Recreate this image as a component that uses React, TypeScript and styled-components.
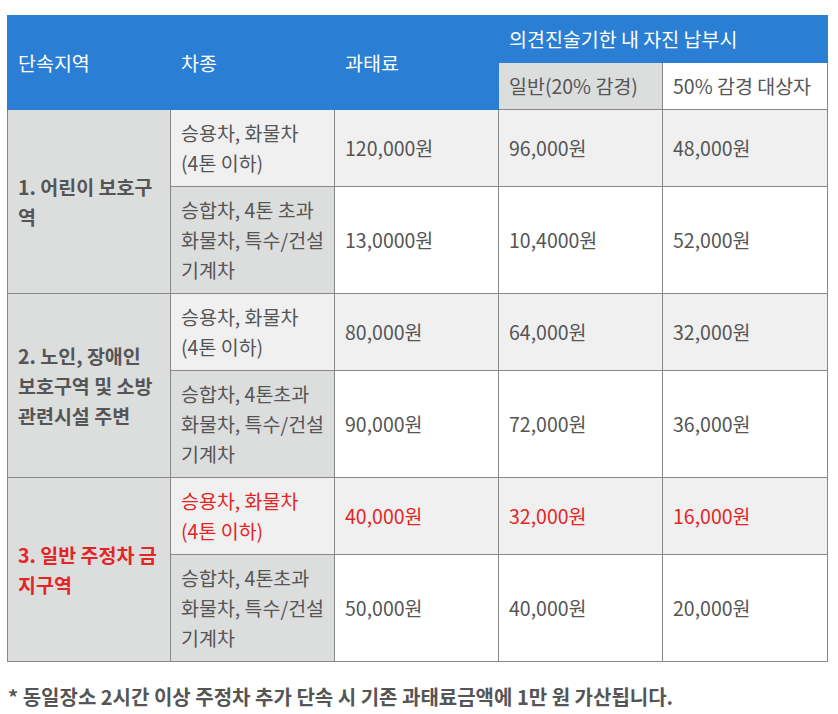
import React from "react";
import styled, { createGlobalStyle } from "styled-components";

const Global = createGlobalStyle`
  html, body { margin: 0; padding: 0; background: #fff; }
  body { font-family: "Noto Sans CJK KR", "Noto Sans", sans-serif; color: #555; }
`;

const Page = styled.div`
  padding: 15px 11px 0 7px;
`;

const Table = styled.table`
  width: 820px;
  border-collapse: collapse;
  table-layout: fixed;
  font-size: 19.5px;
  line-height: 30px;
`;

const HeadCell = styled.th`
  background: #2a7fd4;
  color: #fff;
  font-weight: 400;
  text-align: left;
  padding: 8px 10px;
  border: 1px solid #2a7fd4;
  vertical-align: middle;
  white-space: nowrap;
`;

const SubHead = styled.th<{ $shade?: boolean }>`
  background: ${(p) => (p.$shade ? "#dcdddd" : "#fff")};
  color: #555;
  font-weight: 400;
  text-align: left;
  padding: 8px 10px;
  border: 1px solid #888;
  white-space: nowrap;
`;

const ZoneCell = styled.td<{ $red?: boolean }>`
  background: #dcdddd;
  color: ${(p) => (p.$red ? "#e32526" : "#555")};
  font-weight: 700;
  padding: 8px 10px;
  border: 1px solid #888;
  vertical-align: middle;
`;

const TypeCell = styled.td<{ $light?: boolean; $red?: boolean }>`
  background: ${(p) => (p.$light ? "#f0f0f0" : "#dcdddd")};
  color: ${(p) => (p.$red ? "#e32526" : "#555")};
  padding: 8px 10px;
  border: 1px solid #888;
  vertical-align: middle;
  white-space: nowrap;
`;

const Cell = styled.td<{ $light?: boolean; $red?: boolean }>`
  background: ${(p) => (p.$light ? "#f0f0f0" : "#fff")};
  color: ${(p) => (p.$red ? "#e32526" : "#555")};
  padding: 8px 10px;
  border: 1px solid #888;
  vertical-align: middle;
`;

const Note = styled.p`
  margin: 20px 0 0 1px;
  font-size: 20px;
  line-height: 30px;
  font-weight: 700;
  color: #555;
`;

type Row = {
  type: React.ReactNode;
  fee: string;
  general: string;
  half: string;
};

type Group = {
  zone: React.ReactNode;
  red?: boolean;
  rows: [Row, Row];
};

const lightType = (
  <>
    승용차, 화물차
    <br />
    (4톤 이하)
  </>
);

const heavyType = (gap: boolean) => (
  <>
    {gap ? "승합차, 4톤 초과" : "승합차, 4톤초과"}
    <br />
    화물차, 특수/건설
    <br />
    기계차
  </>
);

const groups: Group[] = [
  {
    zone: (
      <>
        1. 어린이 보호구
        <br />역
      </>
    ),
    rows: [
      { type: lightType, fee: "120,000원", general: "96,000원", half: "48,000원" },
      { type: heavyType(true), fee: "13,0000원", general: "10,4000원", half: "52,000원" },
    ],
  },
  {
    zone: (
      <>
        2. 노인, 장애인
        <br />
        보호구역 및 소방
        <br />
        관련시설 주변
      </>
    ),
    rows: [
      { type: lightType, fee: "80,000원", general: "64,000원", half: "32,000원" },
      { type: heavyType(false), fee: "90,000원", general: "72,000원", half: "36,000원" },
    ],
  },
  {
    zone: (
      <>
        3. 일반 주정차 금
        <br />
        지구역
      </>
    ),
    red: true,
    rows: [
      { type: lightType, fee: "40,000원", general: "32,000원", half: "16,000원" },
      { type: heavyType(false), fee: "50,000원", general: "40,000원", half: "20,000원" },
    ],
  },
];

export default function App() {
  return (
    <>
      <Global />
      <Page>
        <Table>
          <colgroup>
            <col style={{ width: 163 }} />
            <col style={{ width: 164 }} />
            <col style={{ width: 164 }} />
            <col style={{ width: 164 }} />
            <col style={{ width: 165 }} />
          </colgroup>
          <thead>
            <tr>
              <HeadCell rowSpan={2}>단속지역</HeadCell>
              <HeadCell rowSpan={2}>차종</HeadCell>
              <HeadCell rowSpan={2}>과태료</HeadCell>
              <HeadCell colSpan={2}>의견진술기한 내 자진 납부시</HeadCell>
            </tr>
            <tr>
              <SubHead $shade>일반(20% 감경)</SubHead>
              <SubHead>50% 감경 대상자</SubHead>
            </tr>
          </thead>
          <tbody>
            {groups.map((g, gi) =>
              g.rows.map((r, ri) => {
                const light = ri === 0;
                const red = g.red && ri === 0;
                return (
                  <tr key={`${gi}-${ri}`}>
                    {ri === 0 && (
                      <ZoneCell rowSpan={2} $red={g.red}>
                        {g.zone}
                      </ZoneCell>
                    )}
                    <TypeCell $light={light} $red={red}>
                      {r.type}
                    </TypeCell>
                    <Cell $light={light} $red={red}>
                      {r.fee}
                    </Cell>
                    <Cell $light={light} $red={red}>
                      {r.general}
                    </Cell>
                    <Cell $light={light} $red={red}>
                      {r.half}
                    </Cell>
                  </tr>
                );
              })
            )}
          </tbody>
        </Table>
        <Note>* 동일장소 2시간 이상 주정차 추가 단속 시 기존 과태료금액에 1만 원 가산됩니다.</Note>
      </Page>
    </>
  );
}
